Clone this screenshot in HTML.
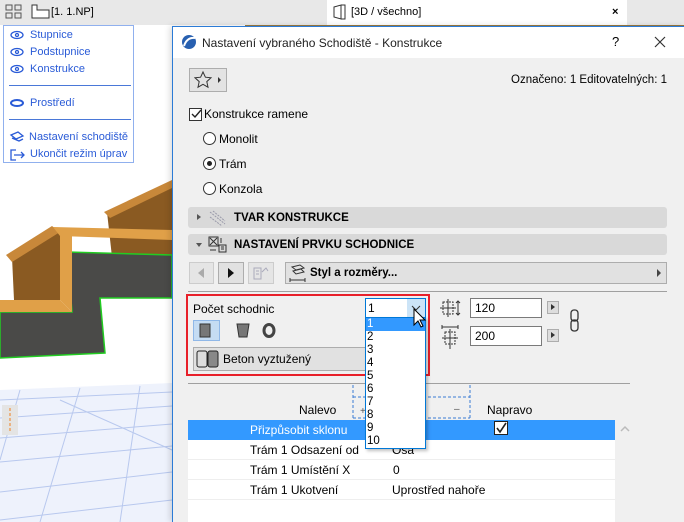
<!DOCTYPE html>
<html><head><meta charset="utf-8">
<style>
*{box-sizing:border-box;margin:0;padding:0}
body{width:684px;height:522px;overflow:hidden;position:relative;background:#fff;font-family:"Liberation Sans",sans-serif;font-size:12px;color:#000}
.a{position:absolute}
.t{position:absolute;white-space:nowrap;line-height:14px}
.pal .t{color:#2a5bd7;font-size:11px}
.bar{position:absolute;left:188px;width:479px;height:21px;background:#d9d9d9;border-radius:3px}
.btn{position:absolute;background:#e1e1e1;border:1px solid #adadad}
.radio{position:absolute;width:13px;height:13px;border:1px solid #333;border-radius:50%;background:#fff}
.inp{position:absolute;background:#fff;border:1px solid #7a7a7a;padding:2px 4px;height:20px}
.dd div{height:13px;line-height:13px;padding-left:1px;font-size:11.5px}
.row{position:absolute;left:188px;width:427px;height:20px;border-bottom:1px solid #eee;background:#fff}
</style></head><body>
<svg class="a" style="left:0;top:0" width="684" height="522">
<rect x="0" y="25" width="684" height="497" fill="#fff"/>
<polygon points="0,390 172,383 172,522 0,522" fill="#eef2fc"/>
<g stroke="#b8c8ee" stroke-width="1">
<line x1="0" y1="400" x2="172" y2="392"/><line x1="0" y1="418" x2="172" y2="406"/><line x1="0" y1="438" x2="172" y2="424"/><line x1="0" y1="462" x2="172" y2="446"/><line x1="0" y1="492" x2="172" y2="472"/><line x1="0" y1="520" x2="172" y2="500"/>
<line x1="20" y1="390" x2="0" y2="460"/><line x1="80" y1="388" x2="40" y2="522"/><line x1="140" y1="386" x2="120" y2="522"/><line x1="60" y1="400" x2="172" y2="450"/>
</g>
<rect x="2" y="405" width="16" height="30" fill="#e4e4e4"/>
<line x1="10" y1="408" x2="10" y2="432" stroke="#f08020" stroke-dasharray="3,2"/>
<polygon points="107,212 172,182 172,257 112,257" fill="#8a5a22"/>
<polygon points="104,212 172,180 172,188 110,218" fill="#c8883a"/>
<polygon points="67,252 172,255 172,298 100,298 105,353 0,358 0,312 72,312" fill="#4a4a48" stroke="#22cc22" stroke-width="1.5"/>
<polygon points="12,257 53,227 60,232 60,300 14,300" fill="#8a5a22"/>
<polygon points="6,255 52,226 60,232 12,262" fill="#c8883a"/>
<polygon points="53,227 172,230 172,240 60,236" fill="#e0a048"/>
<polygon points="60,232 72,232 72,312 60,300" fill="#e0a048"/>
<polygon points="0,300 60,300 72,312 0,312" fill="#e0a048"/>
<polygon points="0,0 684,0 684,25 0,25" fill="#e8e8e8"/>
<rect x="327" y="0" width="300" height="25" fill="#fff"/>
<rect x="245" y="25" width="439" height="2" fill="#9a7a40"/>
</svg>
<svg class="a" style="left:5px;top:4px" width="20" height="16"><g fill="none" stroke="#555"><rect x="1" y="1" width="6" height="5"/><rect x="10" y="1" width="6" height="5"/><rect x="1" y="9" width="6" height="5"/><rect x="10" y="9" width="6" height="5"/></g></svg>
<svg class="a" style="left:31px;top:3px" width="20" height="16"><path d="M1 15V2h5v5h12v8z" fill="#fff" stroke="#333"/></svg>
<div class="t" style="left:51px;top:5px;font-size:11px">[1. 1.NP]</div>
<svg class="a" style="left:333px;top:4px" width="14" height="16"><path d="M1 3l7-2v14l-7-2zM8 1h4v14h-4" fill="#fff" stroke="#333"/></svg>
<div class="t" style="left:351px;top:5px;font-size:11px">[3D / všechno]</div>
<div class="t" style="left:612px;top:5px;font-size:11px;font-weight:bold">×</div>
<div class="a pal" style="left:3px;top:25px;width:131px;height:138px;background:#fff;border:1px solid #90b0ee">
<div class="t" style="left:26px;top:2px">Stupnice</div>
<div class="t" style="left:26px;top:19px">Podstupnice</div>
<div class="t" style="left:26px;top:36px">Konstrukce</div>
<div class="a" style="left:5px;top:59px;width:122px;height:1px;background:#4a78d8"></div>
<div class="t" style="left:26px;top:70px">Prostředí</div>
<div class="a" style="left:5px;top:93px;width:122px;height:1px;background:#4a78d8"></div>
<div class="t" style="left:25px;top:104px">Nastavení schodiště</div>
<div class="t" style="left:26px;top:121px">Ukončit režim úprav</div>
<svg class="a" style="left:5px;top:3px" width="18" height="134"><g fill="none" stroke="#2a5bd7" stroke-width="1.3"><ellipse cx="8" cy="6" rx="6" ry="3.5"/><circle cx="8" cy="6" r="1.5"/><ellipse cx="8" cy="23" rx="6" ry="3.5"/><circle cx="8" cy="23" r="1.5"/><ellipse cx="8" cy="40" rx="6" ry="3.5"/><circle cx="8" cy="40" r="1.5"/><ellipse cx="8" cy="74" rx="6" ry="3" stroke-width="2"/><path d="M2 106l7-3 5 4-7 3zM3 109l7 3 4-2"/><path d="M7 121H2v10h5M5 126h10M12 123l3 3-3 3"/></g></svg>
</div>
<div class="a" style="left:172px;top:26px;width:512px;height:496px;background:#f0f0f0;border:1px solid #2b7bd6;border-right:none;border-bottom:none;box-shadow:-2px 0 6px rgba(0,0,0,.15)">
<div class="a" style="left:0;top:0;width:512px;height:31px;background:#fff"></div>
</div>
<svg class="a" style="left:181px;top:34px" width="16" height="16"><circle cx="8" cy="8" r="7" fill="#2860b0"/><path d="M3 12q3-9 11-8" stroke="#fff" stroke-width="2" fill="none"/></svg>
<div class="t" style="left:202px;top:36px;font-size:12px;color:#222">Nastavení vybraného Schodiště - Konstrukce</div>
<div class="t" style="left:612px;top:35px;font-size:13px">?</div>
<svg class="a" style="left:654px;top:36px" width="12" height="12"><path d="M1 1l10 10M11 1L1 11" stroke="#333" stroke-width="1.2"/></svg>
<div class="btn" style="left:189px;top:68px;width:38px;height:24px;background:#e3e3e3"></div>
<svg class="a" style="left:194px;top:70px" width="30" height="20"><path d="M9 2l2.4 5.2 5.6.6-4.2 3.8 1.2 5.6-5-2.9-5 2.9 1.2-5.6-4.2-3.8 5.6-.6z" fill="none" stroke="#333"/><path d="M24 7l3 3-3 3z" fill="#333"/></svg>
<div class="t" style="right:17px;top:73px;font-size:11.5px">Označeno: 1 Editovatelných: 1</div>
<div class="a" style="left:189px;top:108px;width:13px;height:13px;border:1px solid #333;background:#fff"></div>
<svg class="a" style="left:190px;top:108px" width="12" height="12"><path d="M2 6l3 3 6-7" stroke="#222" stroke-width="1.4" fill="none"/></svg>
<div class="t" style="left:204px;top:107px">Konstrukce ramene</div>
<div class="radio" style="left:203px;top:132px"></div><div class="t" style="left:219px;top:132px">Monolit</div>
<div class="radio" style="left:203px;top:157px"></div><div class="a" style="left:207px;top:161px;width:5px;height:5px;border-radius:50%;background:#222"></div><div class="t" style="left:219px;top:157px">Trám</div>
<div class="radio" style="left:203px;top:182px"></div><div class="t" style="left:219px;top:182px">Konzola</div>
<div class="bar" style="top:207px"></div>
<div class="a" style="left:197px;top:214px;border-left:4px solid #555;border-top:3.5px solid transparent;border-bottom:3.5px solid transparent"></div>
<svg class="a" style="left:208px;top:209px" width="20" height="18"><path d="M2 3l15 12M2 8l12 9M5 2l12 10" stroke="#9a9aaa" stroke-dasharray="2,1" fill="none"/></svg>
<div class="t" style="left:234px;top:211px;font-weight:bold;font-size:11.5px">TVAR KONSTRUKCE</div>
<div class="bar" style="top:234px"></div>
<div class="a" style="left:196px;top:243px;border-top:4px solid #555;border-left:3.5px solid transparent;border-right:3.5px solid transparent"></div>
<svg class="a" style="left:208px;top:236px" width="20" height="18"><g fill="none" stroke="#333"><rect x="1" y="1" width="9" height="9"/><path d="M2 2l7 7M9 2l-7 7M11 9h7v7h-7zM13 11h3M13 13h3M2 14h6M13 2v5"/></g></svg>
<div class="t" style="left:234px;top:238px;font-weight:bold;font-size:11.5px">NASTAVENÍ PRVKU SCHODNICE</div>
<div class="btn" style="left:189px;top:262px;width:25px;height:22px;border-color:#ccc;background:#e5e5e5"></div>
<div class="a" style="left:198px;top:268px;border-right:6px solid #aaa;border-top:5px solid transparent;border-bottom:5px solid transparent"></div>
<div class="btn" style="left:218px;top:262px;width:26px;height:22px"></div>
<div class="a" style="left:228px;top:268px;border-left:6px solid #111;border-top:5px solid transparent;border-bottom:5px solid transparent"></div>
<div class="btn" style="left:248px;top:262px;width:26px;height:22px;border-color:#ccc;background:#e5e5e5"></div>
<svg class="a" style="left:252px;top:265px" width="18" height="16"><path d="M2 3h7v11H2zM4 6h3M4 9h3M10 7l4-4 2 3" stroke="#aab" fill="none"/></svg>
<div class="btn" style="left:285px;top:262px;width:382px;height:22px"></div>
<svg class="a" style="left:289px;top:264px" width="18" height="18"><path d="M3 3l8-2 4 3-8 2zM4 7l8-2 3 3-8 2zM1 16h15M1 14v4M16 14v4" stroke="#333" fill="none"/></svg>
<div class="t" style="left:310px;top:266px;font-weight:bold;font-size:11.5px">Styl a rozměry...</div>
<div class="a" style="left:657px;top:269px;border-left:4px solid #444;border-top:4px solid transparent;border-bottom:4px solid transparent"></div>
<div class="a" style="left:188px;top:291px;width:479px;height:1px;background:#a0a0a0"></div>
<div class="a" style="left:186px;top:294px;width:244px;height:82px;border:2px solid #e8202a"></div>
<div class="t" style="left:193px;top:302px">Počet schodnic</div>
<div class="a" style="left:193px;top:320px;width:27px;height:21px;background:#c5dcf3;border:1px solid #90b8e8"></div>
<svg class="a" style="left:199px;top:323px" width="80" height="16"><rect x="1" y="1" width="10" height="13" fill="#777" stroke="#333"/><path d="M38 1h12l-2 13h-8z" fill="#777" stroke="#333"/><ellipse cx="70" cy="7.5" rx="5" ry="6" fill="none" stroke="#444" stroke-width="3"/></svg>
<div class="btn" style="left:193px;top:347px;width:180px;height:24px"></div>
<svg class="a" style="left:196px;top:350px" width="26" height="18"><rect x="1" y="1" width="10" height="16" rx="2" fill="#ddd" stroke="#222"/><rect x="12" y="1" width="10" height="16" rx="2" fill="#888" stroke="#222"/></svg>
<div class="t" style="left:223px;top:352px;font-size:12px">Beton vyztužený</div>
<svg class="a" style="left:440px;top:299px" width="22" height="50"><g fill="none" stroke="#333"><rect x="3" y="3" width="10" height="12" stroke-dasharray="2,1"/><path d="M0 9h16M8 0v18M18 2v14M16 4l2-2 2 2M16 14l2 2 2-2"/><rect x="5" y="33" width="10" height="12" stroke-dasharray="2,1"/><path d="M2 39h16M10 30v20M2 28h16M2 26v4M18 26v4"/></g></svg>
<div class="inp" style="left:470px;top:298px;width:72px">120</div>
<div class="btn" style="left:547px;top:301px;width:12px;height:13px;background:#ddd"></div>
<div class="a" style="left:551px;top:304px;border-left:4px solid #333;border-top:3.5px solid transparent;border-bottom:3.5px solid transparent"></div>
<div class="inp" style="left:470px;top:326px;width:72px">200</div>
<div class="btn" style="left:547px;top:329px;width:12px;height:13px;background:#ddd"></div>
<div class="a" style="left:551px;top:332px;border-left:4px solid #333;border-top:3.5px solid transparent;border-bottom:3.5px solid transparent"></div>
<svg class="a" style="left:569px;top:309px" width="12" height="24"><g fill="none" stroke="#333" stroke-width="1.3"><rect x="2" y="1" width="7" height="11" rx="3"/><rect x="2" y="11" width="7" height="11" rx="3"/></g></svg>
<div class="a" style="left:188px;top:383px;width:442px;height:1px;background:#a0a0a0"></div>
<svg class="a" style="left:350px;top:384px" width="125" height="36"><g fill="none" stroke="#3a7bd5" stroke-dasharray="3,2"><path d="M3 1v34M120 1v34M3 13h117M3 34h117"/></g><text x="10" y="30" font-size="10" fill="#555">+</text><text x="104" y="28" font-size="10" fill="#555">–</text></svg>
<div class="t" style="left:299px;top:403px">Nalevo</div>
<div class="t" style="left:487px;top:403px">Napravo</div>
<div class="a" style="left:188px;top:420px;width:427px;height:102px;background:#fff"></div>
<div class="row" style="top:420px;background:#3399ff;border:none"></div>
<div class="t" style="left:250px;top:423px;color:#fff">Přizpůsobit sklonu</div>
<div class="a" style="left:494px;top:421px;width:14px;height:14px;background:#fff;border:1px solid #222"></div>
<svg class="a" style="left:495px;top:422px" width="12" height="12"><path d="M2 6l3 4 6-9" stroke="#222" stroke-width="1.6" fill="none"/></svg>
<div class="row" style="top:440px"></div><div class="t" style="left:250px;top:443px">Trám 1 Odsazení od</div><div class="t" style="left:392px;top:443px">Osa</div>
<div class="row" style="top:460px"></div><div class="t" style="left:250px;top:463px">Trám 1 Umístění X</div><div class="t" style="left:393px;top:463px">0</div>
<div class="row" style="top:480px"></div><div class="t" style="left:250px;top:483px">Trám 1 Ukotvení</div><div class="t" style="left:392px;top:483px">Uprostřed nahoře</div>
<svg class="a" style="left:619px;top:425px" width="12" height="8"><path d="M2 6l4-4 4 4" stroke="#bbb" fill="none" stroke-width="1.5"/></svg>
<div class="a" style="left:365px;top:298px;width:61px;height:20px;background:#fff;border:1px solid #0078d7"></div>
<div class="t" style="left:368px;top:301px">1</div>
<div class="a" style="left:407px;top:299px;width:18px;height:18px;background:#cce4f7"></div>
<svg class="a" style="left:410px;top:304px" width="12" height="8"><path d="M2 2l4 4 4-4" stroke="#333" fill="none"/></svg>
<div class="a dd" style="left:365px;top:317px;width:61px;height:132px;background:#fff;border:1px solid #0078d7;box-shadow:2px 2px 3px rgba(0,0,0,.25)">
<div style="background:#3399ff;color:#fff">1</div><div>2</div><div>3</div><div>4</div><div>5</div><div>6</div><div>7</div><div>8</div><div>9</div><div>10</div>
</div>
<svg class="a" style="left:413px;top:308px" width="14" height="22"><path d="M1 1v16l4-4 3 6 2-1-3-6h5z" fill="#fff" stroke="#000"/></svg>
</body></html>
